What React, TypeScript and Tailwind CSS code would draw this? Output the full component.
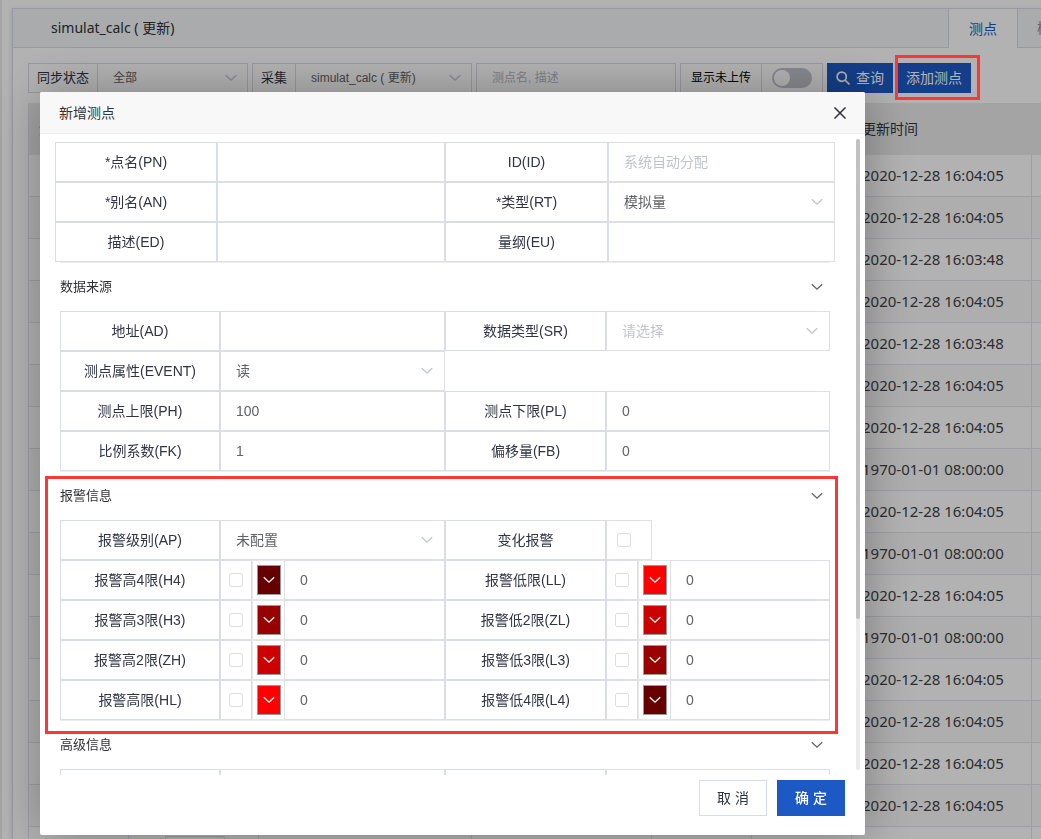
import type { ReactNode } from 'react';

const times = [
  '2020-12-28 16:04:05',
  '2020-12-28 16:04:05',
  '2020-12-28 16:03:48',
  '2020-12-28 16:04:05',
  '2020-12-28 16:03:48',
  '2020-12-28 16:04:05',
  '2020-12-28 16:04:05',
  '1970-01-01 08:00:00',
  '2020-12-28 16:04:05',
  '1970-01-01 08:00:00',
  '2020-12-28 16:04:05',
  '1970-01-01 08:00:00',
  '2020-12-28 16:04:05',
  '2020-12-28 16:04:05',
  '2020-12-28 16:04:05',
  '2020-12-28 16:04:05',
  '',
];

const highLimits = [
  { id: 'h4', label: '报警高4限(H4)', color: '#660000' },
  { id: 'h3', label: '报警高3限(H3)', color: '#990000' },
  { id: 'zh', label: '报警高2限(ZH)', color: '#cc0000' },
  { id: 'hl', label: '报警高限(HL)', color: '#ff0000' },
];

const lowLimits = [
  { id: 'll', label: '报警低限(LL)', color: '#ff0000' },
  { id: 'zl', label: '报警低2限(ZL)', color: '#cc0000' },
  { id: 'l3', label: '报警低3限(L3)', color: '#990000' },
  { id: 'l4', label: '报警低4限(L4)', color: '#660000' },
];

function Chevron({ className }: { className: string }) {
  return (
    <svg className={className} width="12" height="12" viewBox="0 0 12 12" fill="none" stroke="currentColor" strokeWidth="1.3" aria-hidden="true">
      <path d="M.8 3.2 6 8.2 11.2 3.2" />
    </svg>
  );
}

function FieldLabel({ id, children }: { id: string; children: ReactNode }) {
  return (
    <label htmlFor={id} className="flex h-10 items-center justify-center border border-[#d8dce5] text-[#303446]">
      {children}
    </label>
  );
}

interface TextFieldProps {
  id: string;
  label: string;
  value?: string;
  placeholder?: string;
}

function TextField({ id, label, value, placeholder }: TextFieldProps) {
  return (
    <>
      <FieldLabel id={id}>{label}</FieldLabel>
      <input
        id={id}
        defaultValue={value}
        placeholder={placeholder}
        className="h-10 w-full min-w-0 border border-[#dcdfe6] px-[15px] text-[#606266] placeholder:text-[#c0c4cc]"
      />
    </>
  );
}

function SelectField({ id, label, value, empty }: { id: string; label: string; value: string; empty?: boolean }) {
  return (
    <>
      <FieldLabel id={id}>{label}</FieldLabel>
      <div className="relative">
        <select
          id={id}
          className={`h-10 w-full appearance-none border border-[#dcdfe6] bg-white px-[15px] ${
            empty ? 'text-[#c0c4cc]' : 'text-[#606266]'
          }`}
        >
          <option>{value}</option>
        </select>
        <Chevron className="pointer-events-none absolute right-3 top-3.5 text-[#c0c4cc]" />
      </div>
    </>
  );
}

function CheckBox({ id, label }: { id: string; label?: string }) {
  return (
    <input
      id={id}
      type="checkbox"
      aria-label={label}
      className="size-3.5 appearance-none rounded-xs border border-[#dcdfe6] bg-white checked:bg-[#1d59c4]"
    />
  );
}

function LimitField({ id, label, color }: { id: string; label: string; color: string }) {
  return (
    <>
      <FieldLabel id={id}>{label}</FieldLabel>
      <div className="flex h-10">
        <div className="flex w-8 shrink-0 items-center justify-center border border-[#dcdfe6]">
          <CheckBox id={`${id}-on`} label={`${label} 启用`} />
        </div>
        <div className="flex w-8 shrink-0 items-center border-y border-l border-[#e6e6e6] pl-1">
          <button
            type="button"
            aria-label={`${label} 颜色`}
            className="flex h-[30px] w-6 items-center justify-center border border-[#999999] text-white"
            style={{ backgroundColor: color }}
          >
            <Chevron className="size-3" />
          </button>
        </div>
        <input id={id} defaultValue="0" className="w-full min-w-0 border border-[#dcdfe6] px-[15px] text-[#606266]" />
      </div>
    </>
  );
}

function Section({ title, marked, children }: { title: string; marked?: boolean; children: ReactNode }) {
  return (
    <section className="relative border-b border-[#ebeef5]">
      <button type="button" className="flex h-12 w-full items-center justify-between pr-[7px] text-[13px] text-[#303133]">
        {title}
        <Chevron className="text-[#606266]" />
      </button>
      <div className="grid grid-cols-[160fr_225fr_161fr_224fr]">{children}</div>
      {marked && (
        <div className="pointer-events-none absolute -bottom-[14px] -left-[15px] -right-2 top-1 border-3 border-[#fe3637]" />
      )}
    </section>
  );
}

function FilterBar() {
  return (
    <div className="flex h-[30px] gap-1 text-xs">
      <div className="flex w-[220px] border border-[#d8dce5]">
        <label htmlFor="sync" className="flex w-[69px] shrink-0 items-center justify-center border-r border-[#d8dce5] text-[13px] text-[#303446]">
          同步状态
        </label>
        <div className="relative flex-1">
          <select id="sync" className="h-full w-full appearance-none pl-[15px] text-[#606266]">
            <option>全部</option>
          </select>
          <Chevron className="pointer-events-none absolute right-2.5 top-2 text-[#c0c4cc]" />
        </div>
      </div>
      <div className="flex w-[220px] border border-[#d8dce5]">
        <label htmlFor="collect" className="flex w-[43px] shrink-0 items-center justify-center border-r border-[#d8dce5] text-[13px] text-[#303446]">
          采集
        </label>
        <div className="relative flex-1">
          <select id="collect" className="h-full w-full appearance-none pl-[15px] text-[#606266]">
            <option>simulat_calc ( 更新)</option>
          </select>
          <Chevron className="pointer-events-none absolute right-2.5 top-2 text-[#c0c4cc]" />
        </div>
      </div>
      <input
        aria-label="测点名, 描述"
        placeholder="测点名, 描述"
        className="w-[200px] border border-[#d8dce5] px-[15px] placeholder:text-[#b4b8c2]"
      />
      <div className="flex w-[143px] border border-[#d8dce5]">
        <label htmlFor="unsent" className="flex w-[81px] shrink-0 items-center justify-center border-r border-[#d8dce5] text-black">
          显示未上传
        </label>
        <div className="flex flex-1 items-center justify-center">
          <input
            id="unsent"
            type="checkbox"
            role="switch"
            className="h-5 w-10 appearance-none rounded-full bg-[#c0c4cc] before:m-0.5 before:block before:size-4 before:rounded-full before:bg-white"
          />
        </div>
      </div>
      <button type="button" className="flex w-[66px] items-center justify-center gap-1.5 bg-[#1d59c4] text-sm text-white">
        <svg width="14" height="14" viewBox="0 0 14 14" fill="none" stroke="currentColor" strokeWidth="1.7" aria-hidden="true">
          <circle cx="5.7" cy="5.7" r="4.6" />
          <path d="m9 9 4.5 4.5" />
        </svg>
        查询
      </button>
      <div className="relative">
        <button type="button" className="h-full w-[74px] bg-[#1d59c4] text-sm text-white">
          添加测点
        </button>
        <div className="pointer-events-none absolute -bottom-[7px] -left-0.5 -right-[9px] -top-2 z-20 border-3 border-[#fe3637]" />
      </div>
    </div>
  );
}

function PointTable() {
  return (
    <table className="mt-2.5 w-full table-fixed border-separate border-spacing-0 border-l border-[#e2e3ec] text-left text-[#505256]">
      <colgroup>
        <col className="w-[100px]" />
        <col className="w-[130px]" />
        <col className="w-[213px]" />
        <col className="w-[180px]" />
        <col className="w-[100px]" />
        <col className="w-[100px]" />
        <col className="w-[180px]" />
        <col />
      </colgroup>
      <thead>
        <tr className="h-[52px] bg-[#ebebeb] text-[#303446]">
          <th className="pl-2.5 font-normal">测点名</th>
          <th />
          <th />
          <th />
          <th />
          <th />
          <th className="pl-2.5 font-normal">更新时间</th>
          <th />
        </tr>
      </thead>
      <tbody className="font-['Noto_Sans','Noto_Sans_CJK_SC',sans-serif] text-[15px] text-[#404246]">
        {times.map((time, i) => (
          <tr key={i} className="h-[42px] even:bg-[#fafafa] *:border-b *:border-r *:border-[#e2e3ec]">
            <td />
            <td className="pl-9">
              <button type="button" aria-label="编辑" className="block h-6 w-[60px] rounded-xs border border-[#d8dce5]" />
            </td>
            <td />
            <td />
            <td />
            <td />
            <td className="whitespace-nowrap pl-2.5">{time}</td>
            <td />
          </tr>
        ))}
      </tbody>
    </table>
  );
}

function PointDialog() {
  return (
    <div
      role="dialog"
      aria-labelledby="dialog-title"
      className="mt-[92px] ml-10 flex h-[743px] w-[825px] flex-col rounded-xs bg-white shadow-[1px_1px_50px_rgba(0,0,0,0.3)]"
    >
      <header className="flex h-[42px] shrink-0 items-center justify-between rounded-t-xs border-b border-[#eeeeee] bg-[#f8f8f8] px-[19px]">
        <h2 id="dialog-title" className="text-[#333333]">新增测点</h2>
        <button type="button" aria-label="关闭" className="text-[#2e2d3c]">
          <svg width="12" height="12" viewBox="0 0 12 12" fill="none" stroke="currentColor" strokeWidth="1.5">
            <path d="m.5.5 11 11m0-11-11 11" />
          </svg>
        </button>
      </header>

      <div className="flex min-h-0 flex-1">
        <div className="flex-1 overflow-hidden pl-[15px] pr-[21px] pt-2">
          <div className="grid grid-cols-[162fr_228fr_163fr_227fr]">
            <TextField id="pn" label="*点名(PN)" />
            <TextField id="pid" label="ID(ID)" placeholder="系统自动分配" />
            <TextField id="an" label="*别名(AN)" />
            <SelectField id="rt" label="*类型(RT)" value="模拟量" />
            <TextField id="ed" label="描述(ED)" />
            <TextField id="eu" label="量纲(EU)" />
          </div>

          <div className="mx-[5px] border-t border-[#ebeef5]">
            <Section title="数据来源">
              <TextField id="ad" label="地址(AD)" />
              <SelectField id="sr" label="数据类型(SR)" value="请选择" empty />
              <SelectField id="event" label="测点属性(EVENT)" value="读" />
              <div className="col-span-2" />
              <TextField id="ph" label="测点上限(PH)" value="100" />
              <TextField id="pl" label="测点下限(PL)" value="0" />
              <TextField id="fk" label="比例系数(FK)" value="1" />
              <TextField id="fb" label="偏移量(FB)" value="0" />
            </Section>

            <Section title="报警信息" marked>
              <SelectField id="ap" label="报警级别(AP)" value="未配置" />
              <FieldLabel id="change">变化报警</FieldLabel>
              <div className="flex w-[46px] items-center border border-[#dcdfe6] pl-2.5">
                <CheckBox id="change" />
              </div>
              {highLimits.map((high, i) => (
                <div key={high.id} className="contents">
                  <LimitField {...high} />
                  <LimitField {...lowLimits[i]} />
                </div>
              ))}
            </Section>

            <Section title="高级信息">
              <TextField id="adv1" label="" />
              <TextField id="adv2" label="" />
            </Section>
          </div>
        </div>

        {/* Scroll bar */}
        <div className="mt-[5px] mr-[5px] mb-[5px] w-1 rounded-full bg-[#ebebeb]">
          <div className="h-[76%] rounded-full bg-[#c1c1c1]" />
        </div>
      </div>

      <footer className="flex h-[60px] shrink-0 justify-end gap-2.5 pr-5 pt-[5px]">
        <button type="button" className="h-9 w-[68px] border border-[#d8dce5] bg-white text-[#303446]">取 消</button>
        <button type="button" className="h-9 w-[68px] bg-[#1d59c4] font-medium text-white">确 定</button>
      </footer>
    </div>
  );
}

export default function App() {
  return (
    <div className="relative h-screen overflow-hidden border-l-2 border-[#ededed] bg-white font-['Liberation_Sans','Noto_Sans_CJK_SC',sans-serif] text-sm">
      <main className="-mr-11 ml-2.5 mt-2 border border-[#d8dce5] bg-white shadow-[0_2px_4px_rgba(0,0,0,0.12),0_0_6px_rgba(0,0,0,0.04)]">
        <div className="flex h-[39px] justify-between bg-[#f2f5f8]">
          <h1 className="flex flex-1 items-center border-b border-[#d8dce5] pl-[38px] font-['Noto_Sans','Noto_Sans_CJK_SC',sans-serif] text-[#303133]">
            simulat_calc ( 更新)
          </h1>
          <nav className="flex">
            <a href="#points" className="flex w-[70px] items-center justify-center border-x border-[#d8dce5] bg-white text-[#1d59c4]">
              测点
            </a>
            <a href="#templates" className="flex w-[66px] items-center justify-center border-b border-[#d8dce5] text-[#909399]">
              模板
            </a>
          </nav>
        </div>
        <div className="px-[15px] pt-[15px]">
          <FilterBar />
          <PointTable />
        </div>
      </main>

      <div className="fixed inset-0 z-10 overflow-hidden bg-black/30">
        <PointDialog />
      </div>
    </div>
  );
}
